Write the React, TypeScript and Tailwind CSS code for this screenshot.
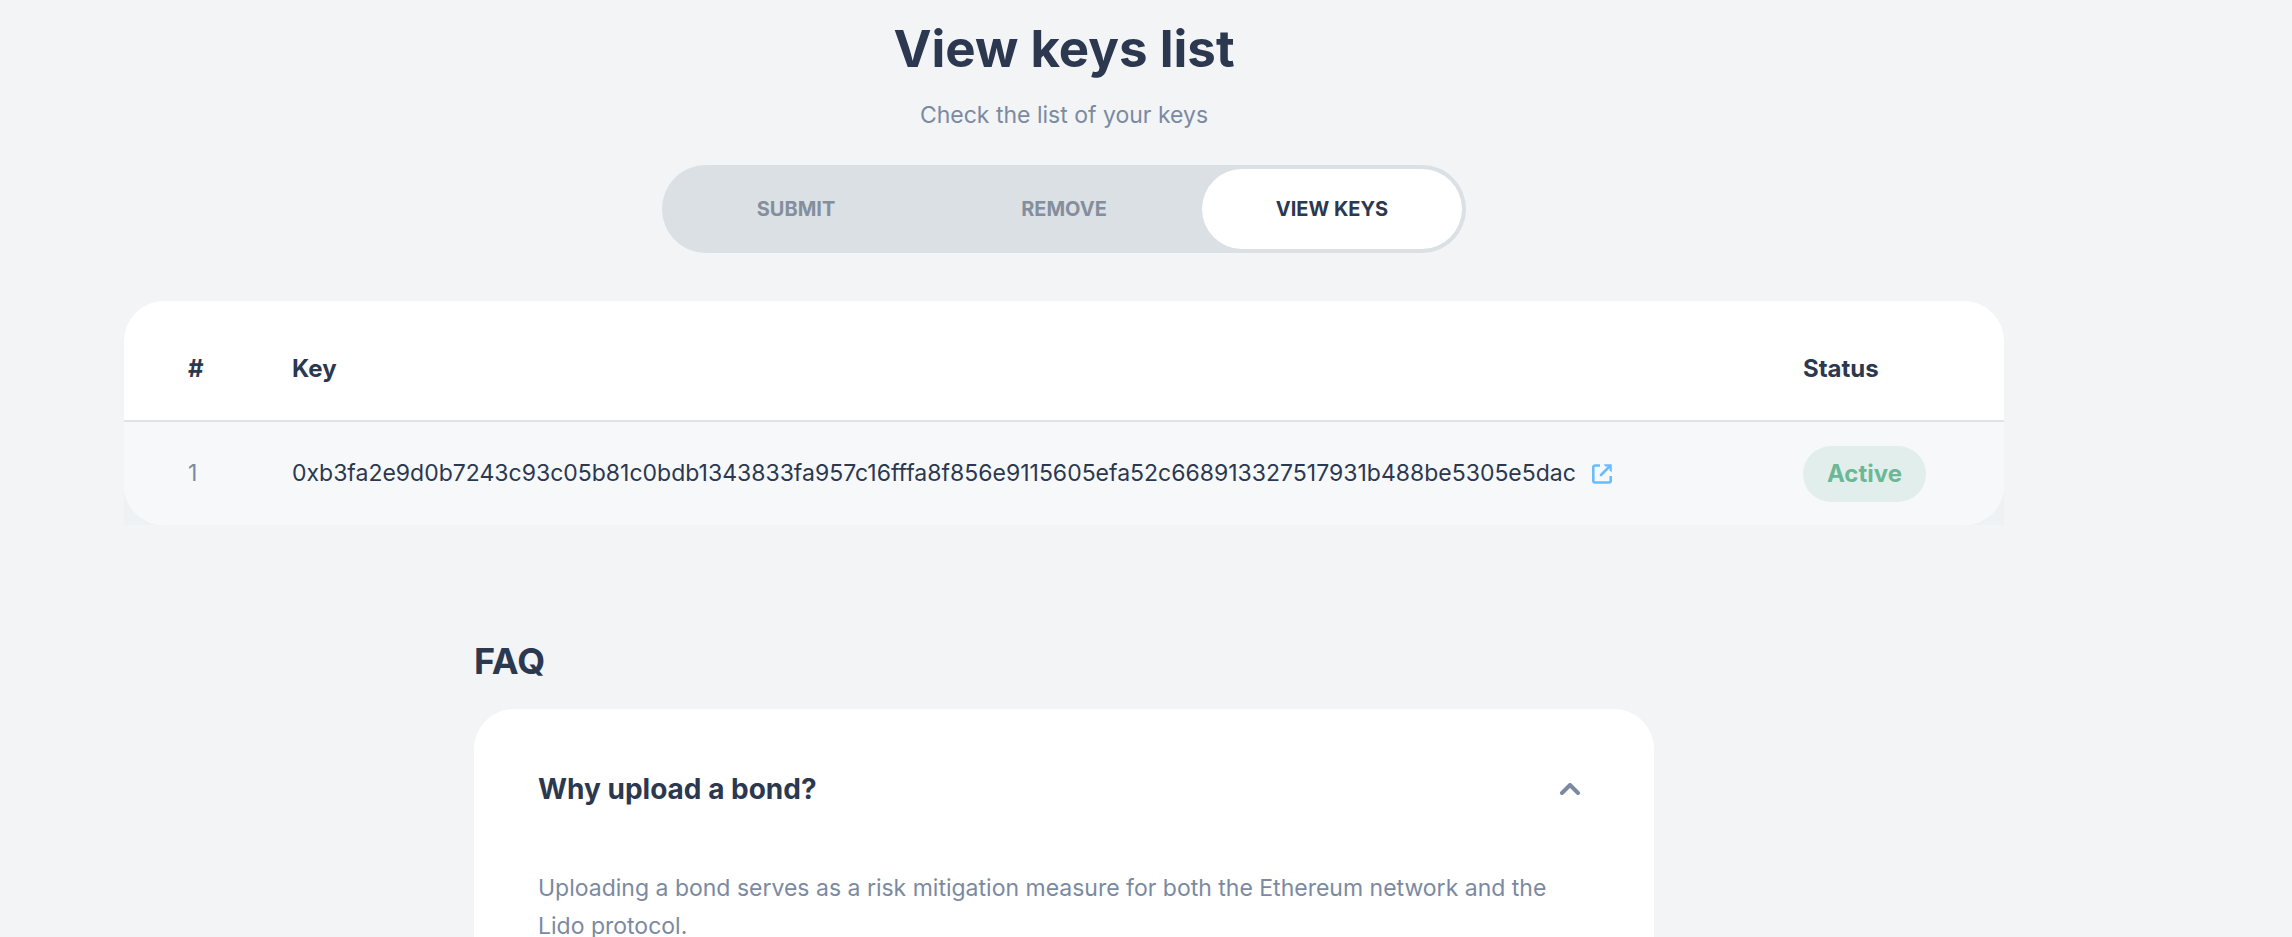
import { useState } from "react";

const TABS = ["Submit", "Remove", "View keys"];

const KEYS = [
  {
    key: "0xb3fa2e9d0b7243c93c05b81c0bdb1343833fa957c16fffa8f856e9115605efa52c668913327517931b488be5305e5dac",
    status: "Active",
  },
];

function ExternalLinkIcon() {
  return (
    <svg viewBox="0 0 20 20" className="size-5" fill="none" stroke="currentColor" strokeWidth="2.6" aria-hidden="true">
      <path d="M8 1.5H3A1.7 1.7 0 0 0 1.3 3.2V16.8A1.7 1.7 0 0 0 3 18.5H17A1.7 1.7 0 0 0 18.7 16.8V12" />
      <path d="M9 11 16 4" strokeLinecap="round" />
      <path d="M12 .2H19.8V8L17.6 6.8V4.6L15.4 2.4H13Z" fill="currentColor" stroke="none" />
    </svg>
  );
}

function ChevronUpIcon({ open }: { open: boolean }) {
  return (
    <svg
      viewBox="0 0 20 12"
      className={open ? "h-3 w-5" : "h-3 w-5 rotate-180"}
      fill="none"
      stroke="currentColor"
      strokeWidth="4"
      strokeLinecap="round"
      strokeLinejoin="round"
      aria-hidden="true"
    >
      <path d="M2 10 10 2 18 10" />
    </svg>
  );
}

function Tabs() {
  const [active, setActive] = useState("View keys");
  return (
    <nav className="mt-8 grid h-22 w-full max-w-[804px] grid-cols-3 rounded-full bg-[#dbe0e4]">
      {TABS.map((tab) => (
        <button
          key={tab}
          type="button"
          onClick={() => setActive(tab)}
          className={
            tab === active
              ? "m-1 rounded-full bg-white text-xl font-bold uppercase text-[#2b3850]"
              : "m-1 rounded-full text-xl font-bold uppercase text-[#848e9d]"
          }
        >
          {tab}
        </button>
      ))}
    </nav>
  );
}

function KeysTable() {
  return (
    <div className="mt-12 w-full bg-linear-to-b from-transparent from-50% to-[#eff2f5] to-50%">
      <div className="overflow-hidden rounded-[40px] bg-white">
        <table className="w-full table-fixed text-left text-2xl">
          <thead>
            <tr className="h-[120px] border-b-2 border-[#dfe4e8] font-bold">
              <th className="w-[168px] pt-4 pl-16">#</th>
              <th className="pt-4">Key</th>
              <th className="w-[201px] pt-4">Status</th>
            </tr>
          </thead>
          <tbody>
            {KEYS.map((row, index) => (
              <tr key={row.key} className="h-[104px] bg-[#f7f8fa]">
                <td className="pl-16 text-[23px] text-[#7b8aa1]">{index + 1}</td>
                <td>
                  <div className="flex items-center gap-4 text-[23px]">
                    <span>{row.key}</span>
                    <a href="#key" aria-label="Open key in explorer" className="text-[#6bbcfd]">
                      <ExternalLinkIcon />
                    </a>
                  </div>
                </td>
                <td>
                  <span className="inline-flex h-14 items-center rounded-full bg-[#e2eeeb] px-6 font-bold text-[#6cb896]">
                    {row.status}
                  </span>
                </td>
              </tr>
            ))}
          </tbody>
        </table>
      </div>
    </div>
  );
}

function Faq() {
  const [open, setOpen] = useState(true);
  return (
    <section className="mt-28 w-full max-w-[1180px]">
      <h2 className="text-4xl leading-[48px] font-bold">FAQ</h2>
      <div className="mt-6 rounded-[40px] bg-white px-16 pt-14 pb-16">
        <button
          type="button"
          aria-expanded={open}
          onClick={() => setOpen(!open)}
          className="flex h-12 w-full items-center justify-between pr-[10px] text-left text-[28px] font-bold"
        >
          Why upload a bond?
          <span className="text-[#7b8aa1]">
            <ChevronUpIcon open={open} />
          </span>
        </button>
        {open && (
          <p className="mt-14 text-[23px] leading-[38px] text-[#7b8aa1]">
            Uploading a bond serves as a risk mitigation measure for both the Ethereum network and the Lido protocol.
          </p>
        )}
      </div>
    </section>
  );
}

export default function App() {
  return (
    <div className="h-screen overflow-hidden bg-[#f2f4f6] pr-[164px] font-['Inter',sans-serif] text-[#2b3850]">
      <main className="flex flex-col items-center px-[124px] pt-[17px]">
        <h1 className="text-[51px] leading-[64px] font-bold">View keys list</h1>
        <p className="mt-4 text-[23px] leading-[36px] text-[#7b8aa1]">Check the list of your keys</p>
        <Tabs />
        <KeysTable />
        <Faq />
      </main>
    </div>
  );
}
